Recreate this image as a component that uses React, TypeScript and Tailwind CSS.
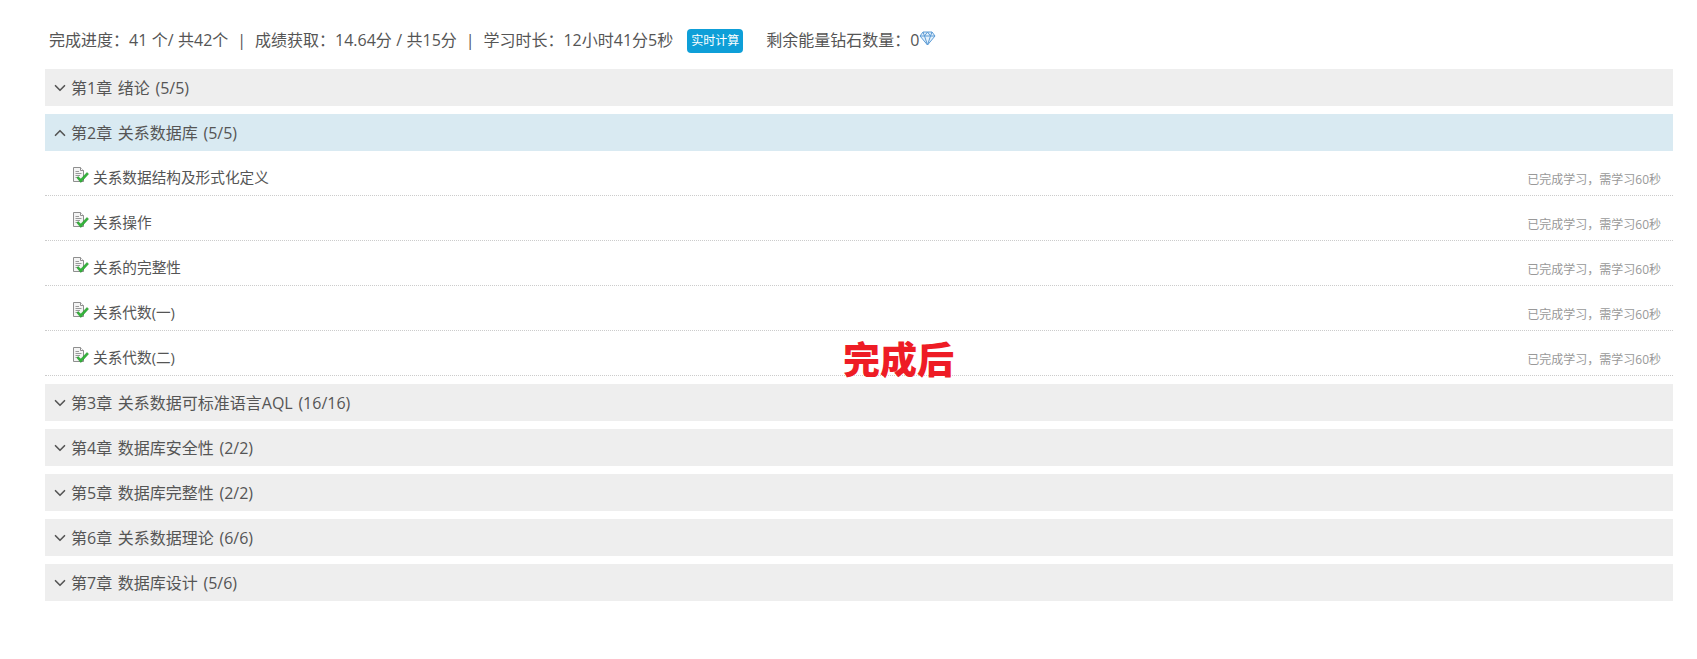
import React from 'react';
import { ChevronDown, ChevronUp } from 'lucide-react';

const fontStack = 'font-["Open_Sans","Noto_Sans_CJK_SC",sans-serif]';

const lessons = ['关系数据结构及形式化定义', '关系操作', '关系的完整性', '关系代数(一)', '关系代数(二)'];

function DocCheck() {
  return (
    <svg width="16" height="17" viewBox="0 0 16 17" className="shrink-0">
      <path d="M0.5 0.5H7.5L10.5 3.5V14.5H0.5Z" fill="#f4f4f4" stroke="#8f8f8f" />
      <path d="M7.5 0.5V3.5H10.5" fill="#fff" stroke="#8f8f8f" />
      <path d="M2.5 4.5H6M2.5 6.5H8.5M2.5 8.5H7M2.5 10.5H6" stroke="#9a9a9a" />
      <path d="M5 9.5L7.8 12L14 5.5L15.5 7L7.8 15.5L4 11Z" fill="#34b53a" stroke="#1c8a24" strokeWidth="0.5" />
    </svg>
  );
}

function Diamond() {
  return (
    <svg width="17" height="15" viewBox="0 0 17 15" fill="none" stroke="#5b9bd5" strokeWidth="1" className="mt-[4px] shrink-0">
      <path d="M4 1H13L16 5L8.5 14L1 5Z" fill="#e3f0fb" />
      <path d="M1 5H16M5.5 5L8.5 14L11.5 5M4 1L5.5 5L8.5 1L11.5 5L13 1" />
    </svg>
  );
}

function Chapter({ title, open }: { title: string; open?: boolean }) {
  return (
    <div className={`h-[37px] flex items-center pl-[6px] text-[16px] text-[#555] [word-spacing:1.5px] ${open ? 'bg-[#d9eaf2]' : 'bg-[#eeeeee]'}`}>
      {open ? <ChevronUp size={18} strokeWidth={2.2} /> : <ChevronDown size={18} strokeWidth={2.2} />}
      <span className="ml-[2px]">{title}</span>
    </div>
  );
}

export default function App() {
  return (
    <div className={`relative w-[1697px] h-[659px] bg-white overflow-hidden pl-[45px] pr-[24px] ${fontStack}`}>
      <div className="h-[69px] pt-[27px] pl-[4px] flex items-start text-[16px] leading-[26px] text-[#555] whitespace-pre">
        <span className="[word-spacing:0.3px]">{'完成进度\uFF1A41 个/ 共42个  |  成绩获取\uFF1A14.64分 / 共15分  |  学习时长\uFF1A12小时41分5秒'}</span>
        <span className="ml-[14px] mt-[2px] h-[24px] w-[56px] text-center rounded-[4px] bg-[#0e9fd8] text-white text-[12px] leading-[24px]">实时计算</span>
        <span className="ml-[23px]">{'剩余能量钻石数量\uFF1A0'}</span>
        <Diamond />
      </div>

      <div className="flex flex-col gap-[8px]">
        <Chapter title="第1章 绪论 (5/5)" />
        <div>
          <Chapter title="第2章 关系数据库 (5/5)" open />
          <div>
            {lessons.map((name) => (
              <div key={name} className="h-[45px] border-b border-dotted border-[#ccc] pl-[28px] pr-[12px] flex items-center justify-between">
                <div className="flex items-start text-[14.67px] text-[#555] pt-[8px]">
                  <DocCheck />
                  <span className="ml-[4px] leading-[20px]">{name}</span>
                </div>
                <span className="text-[12px] text-[#999] pt-[14px]">{'已完成学习\uFF0C需学习60秒'}</span>
              </div>
            ))}
          </div>
        </div>
        <Chapter title="第3章 关系数据可标准语言AQL (16/16)" />
        <Chapter title="第4章 数据库安全性 (2/2)" />
        <Chapter title="第5章 数据库完整性 (2/2)" />
        <Chapter title="第6章 关系数据理论 (6/6)" />
        <Chapter title="第7章 数据库设计 (5/6)" />
      </div>

      <div className="absolute left-[843px] top-[336px] text-[37px] leading-[48px] font-black text-[#ee1c25]">完成后</div>
    </div>
  );
}
